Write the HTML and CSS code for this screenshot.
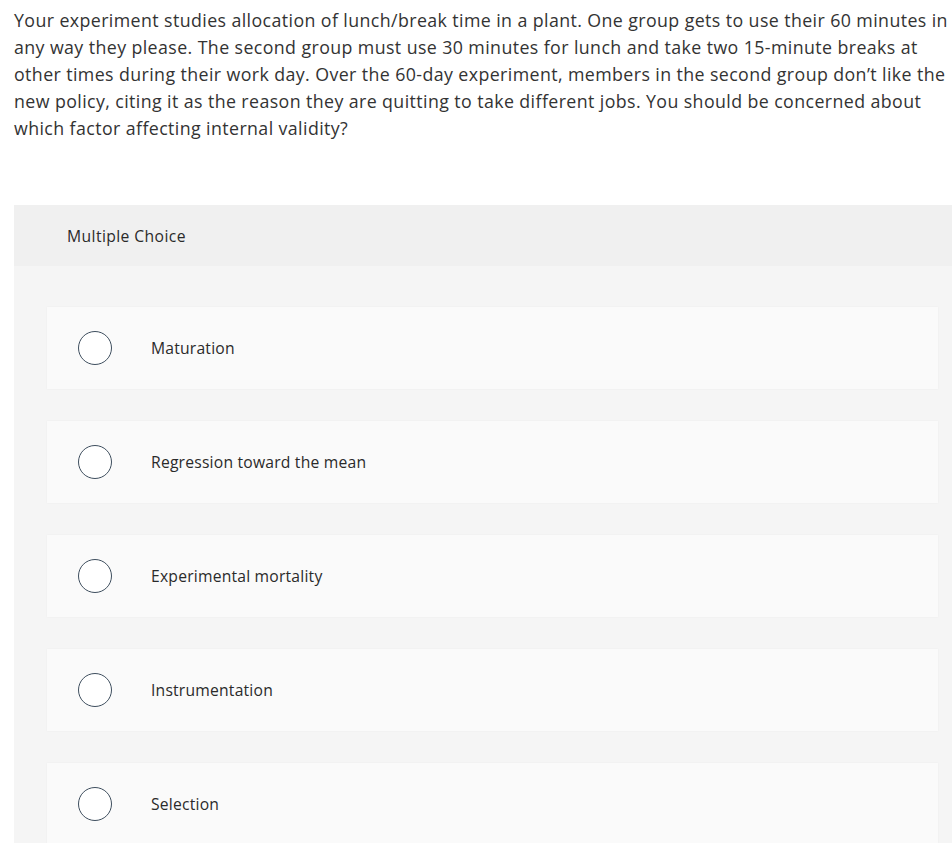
FILE: index.html
```html
<!DOCTYPE html>
<html>
<head>
<meta charset="utf-8">
<link rel="stylesheet" href="styles.css">
</head>
<body>
<div class="page">
  <p class="question">Your experiment studies allocation of lunch/break time in a plant. One group gets to use their 60 minutes in any way they please. The second group must use 30 minutes for lunch and take two 15-minute breaks at other times during their work day. Over the 60-day experiment, members in the second group don’t like the new policy, citing it as the reason they are quitting to take different jobs. You should be concerned about which factor affecting internal validity?</p>
  <div class="mc">
    <div class="mc-head">Multiple Choice</div>
    <div class="mc-body">
      <div class="opt"><span class="radio"></span><span class="label">Maturation</span></div>
      <div class="opt"><span class="radio"></span><span class="label">Regression toward the mean</span></div>
      <div class="opt"><span class="radio"></span><span class="label">Experimental mortality</span></div>
      <div class="opt"><span class="radio"></span><span class="label">Instrumentation</span></div>
      <div class="opt"><span class="radio"></span><span class="label">Selection</span></div>
    </div>
  </div>
</div>
</body>
</html>
```
FILE: styles.css
```css
html, body { margin: 0; padding: 0; background: #fff; overflow: hidden; }
body { font-family: "Open Sans", Lato, sans-serif; color: #333; }
.page { width: 952px; height: 843px; overflow: hidden; }
.question {
  margin: 0;
  padding: 7px 0 0 14px;
  font-size: 17.8px;
  letter-spacing: 0.4px;
  line-height: 27px;
  width: 938px;
  color: #333;
}
.mc { margin: 63px 0 0 14px; width: 960px; }
.mc-head {
  background: #f0f0f0;
  height: 61px;
  display: flex;
  align-items: center;
  padding-left: 53px;
  font-size: 15.7px;
  letter-spacing: 0.4px;
  color: #2a2a2a;
}
.mc-body {
  background: #f5f5f5;
  padding: 41px 0 40px 33px;
  display: flex;
  flex-direction: column;
  gap: 32px;
}
.opt {
  width: 891px;
  height: 82px;
  background: #fafafa;
  box-shadow: 0 0 2px rgba(0,0,0,0.04);
  display: flex;
  align-items: center;
  padding-left: 31px;
  box-sizing: border-box;
}
.radio {
  width: 32px;
  height: 32px;
  border: 1.5px solid #3e4e5e;
  border-radius: 50%;
  background: #fff;
  flex: none;
}
.label {
  margin-left: 39px;
  font-size: 15.7px;
  letter-spacing: 0.2px;
  color: #2a2a2a;
}
```
